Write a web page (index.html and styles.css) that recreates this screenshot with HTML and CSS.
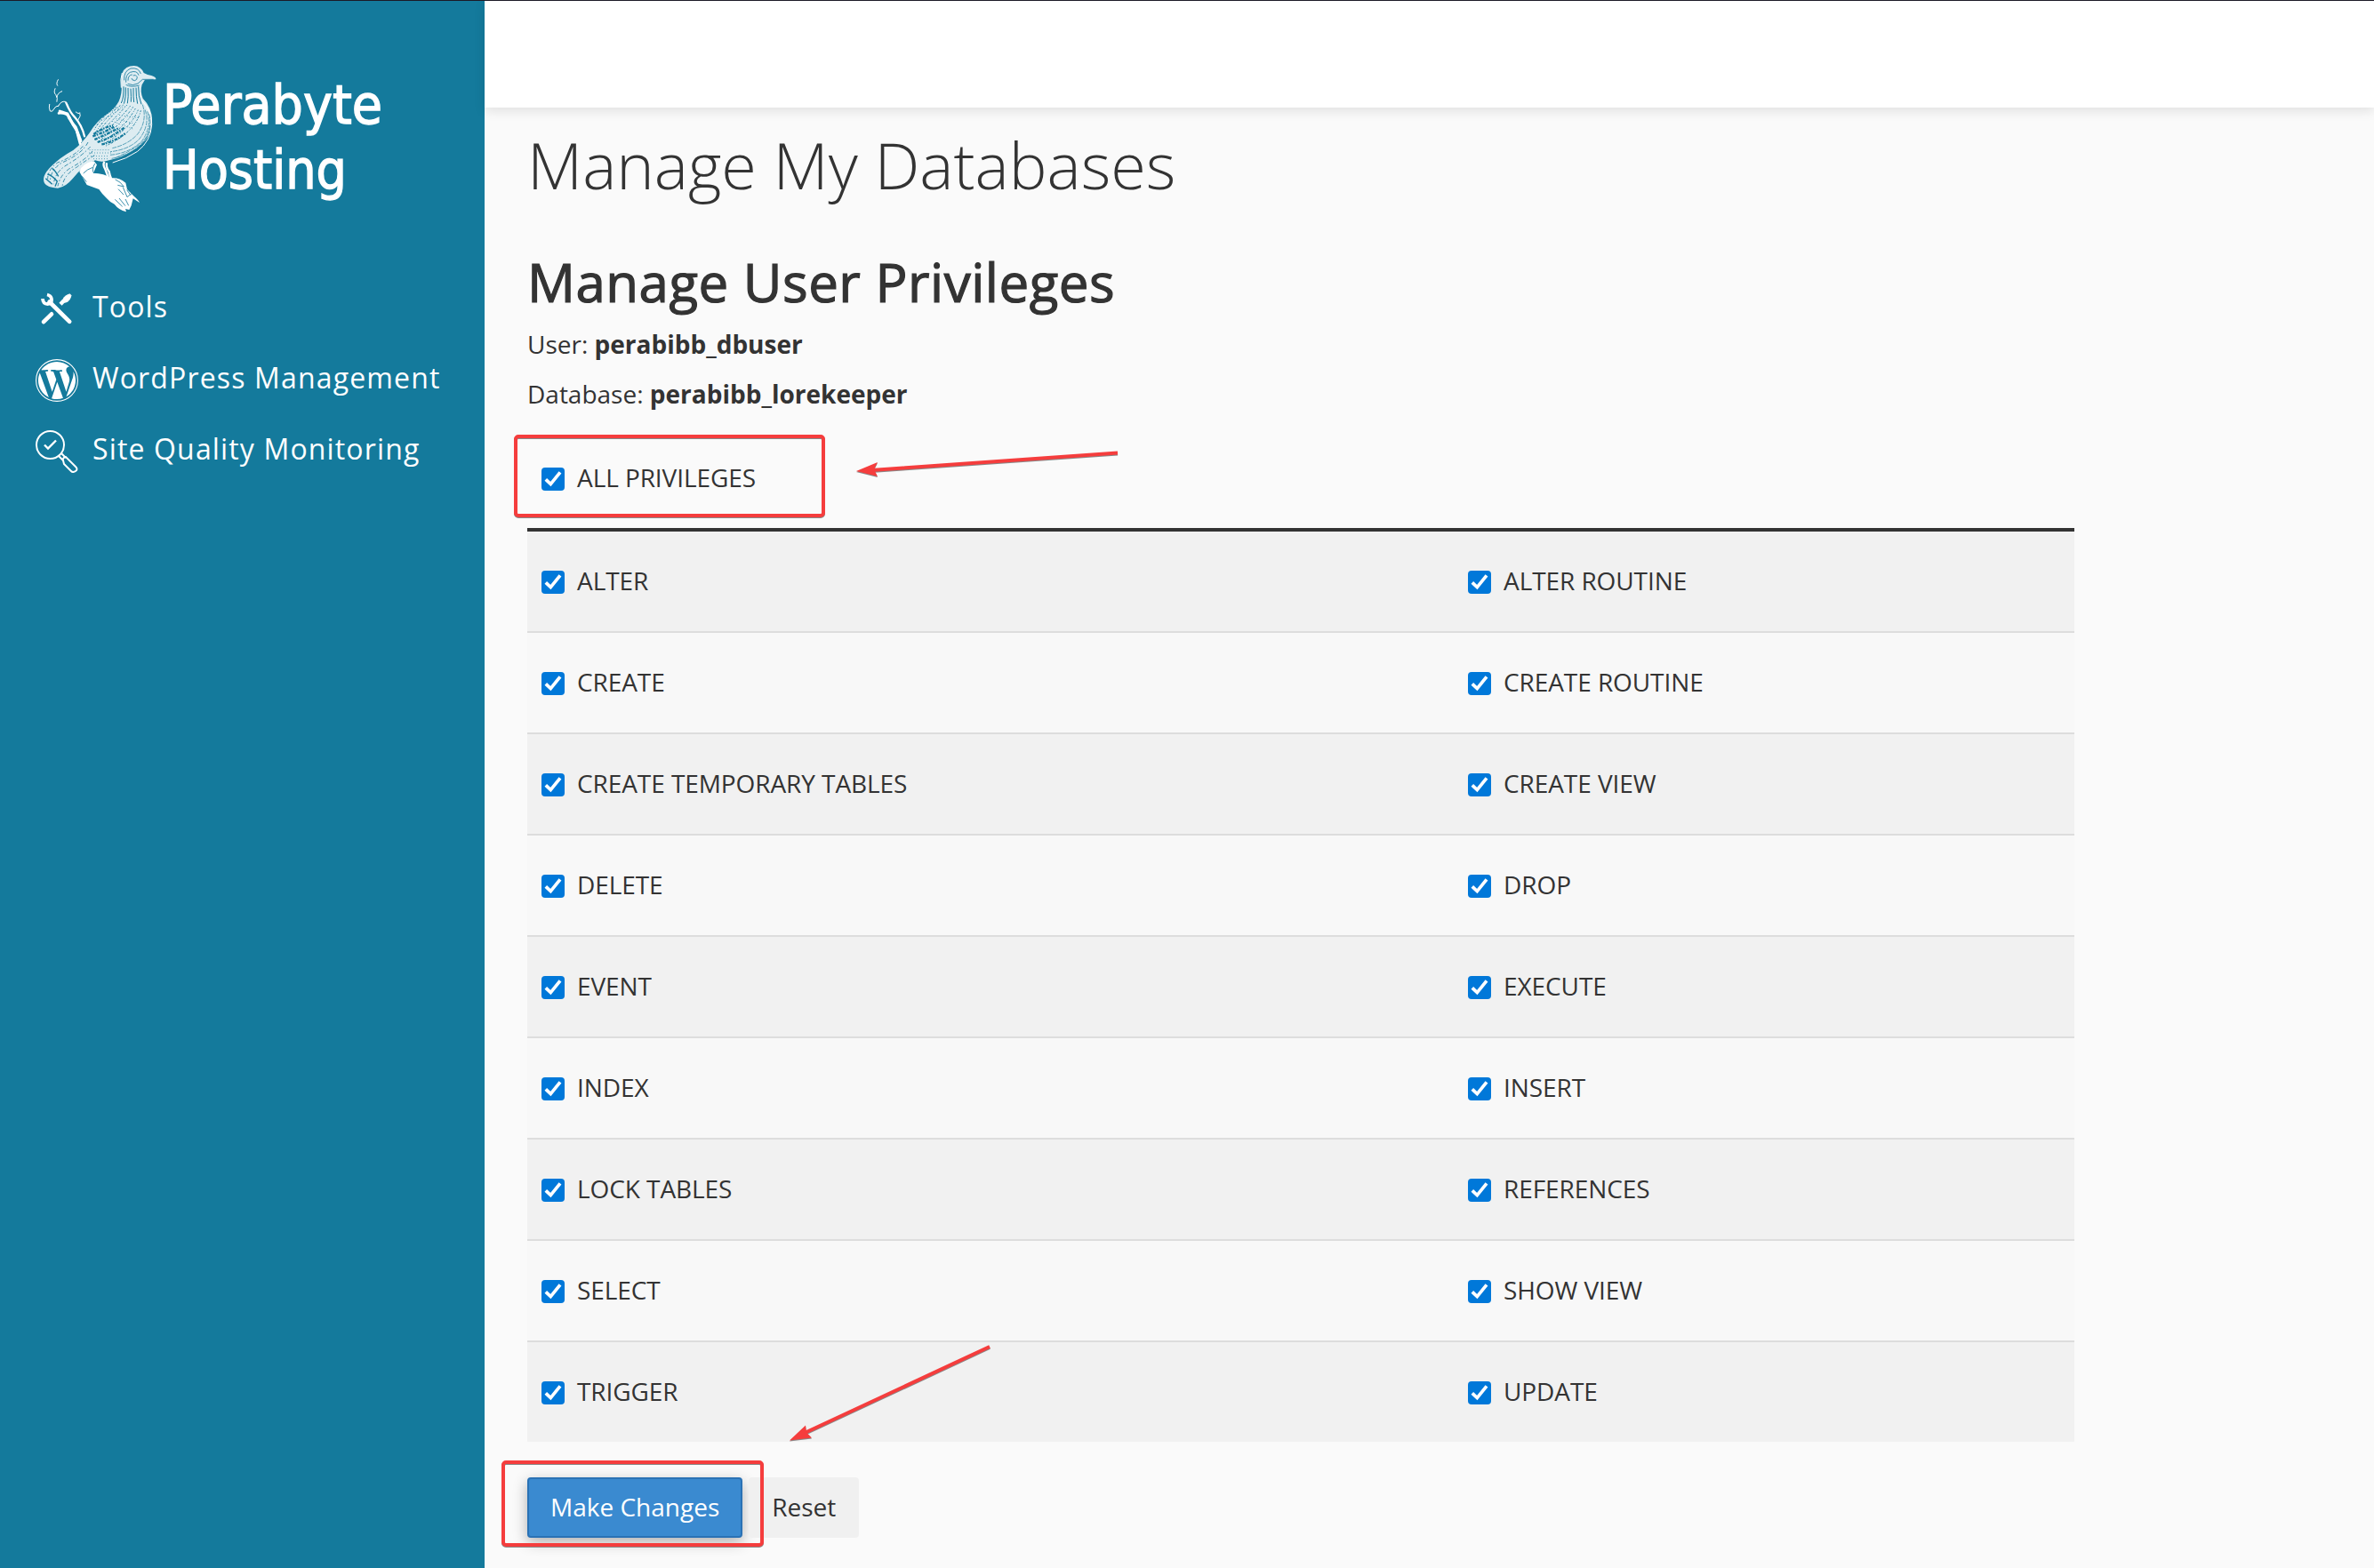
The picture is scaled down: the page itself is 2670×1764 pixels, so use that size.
FILE: index.html
```html
<!DOCTYPE html>
<html lang="en">
<head>
<meta charset="utf-8">
<title>Manage My Databases</title>
<link rel="stylesheet" href="styles.css">
</head>
<body>
<svg class="defs" width="0" height="0">
  <symbol id="check" viewBox="0 0 26 26">
    <rect width="26" height="26" rx="4" fill="#0078d9"/>
    <path d="M4.800 13.300l5.500 5.300L21 5.300" fill="none" stroke="#fff" stroke-width="3.700"/>
  </symbol>
</svg>
<div class="app">
  <aside class="sidebar">
    <div class="brand">
      <svg class="bird" viewBox="0 0 480 570">
        <g fill="none" stroke="#fff" stroke-linecap="round">
          <path stroke-width="3" d="M106 89q-8 13-2 20m-8 10q-6 14 2 20q8 12 4 24m17-35q-16 6-17 20M77 172q-3 12 2 23q8 4 12-6q6-12 16-12M107 178q8-18 24-15l9 14M166 198q10 8 13 2q6 10-5 24"/>
          <path stroke-width="7" d="M133 167q14 34 28 47q25 28 34 66"/>
          <path stroke-width="10" stroke-dasharray="9 3" d="M112 196l25 8q10 24 28 45l18 48"/>
          <path stroke-width="8" d="M108 202q30-2 38 17q9 24 22 41l12 45"/>
        </g>
        <path fill="#fff" d="M178 400q8-29 49-36l10 12-12 28q36 1 61 17q25-3 48 16l5 22 23 23q17 15 19 22l-22-14-6 24-7 14-13-3 3 10q-26-7-40-26q-14-6-24-18q-18-16-28-32l-41-15z"/>
        <path fill="#fff" fill-opacity=".86" d="M362 42q-30 0-39 24q-7 20-3 46q2 24-9 50q-12 23-40 43q-35 24-58 62q-27 38-56 60q-44 24-76 56q-32 32-21 55q9 15 45 17q27-4 50-32q34-43 76-62q22 8 41 1l36-9q46-17 81-48q32-27 34-78q1-43-31-75q-10-23-3-46l10-17 37-1q2-7-15-13q-13-2-26-9q-10-23-33-24z"/>
        <path fill="none" stroke="#fff" stroke-width="7" d="M262 365q-6 12 3 26q8 28 26 57M270 370q-3 15 8 29q4 24 22 50"/>
        <g fill="none" stroke="#147a9c">
          <path stroke-width="3" d="M327 112q2 36-8 56M334 115q1 36-6 55M342 117q2 32-2 52M351 119q2 31 1 45M360 117q-1 31 2 48M369 116q0 31 5 54M377 112q-1 33 10 60"/>
          <path stroke-width="2.500" d="M329 91q-2-31 22-40q27-4 34 18M335 98q-2-26 14-34q24-8 29 10M342 92q0-19 14-20M359 75q9-5 14 5q0 10-8 12q-11-1-11-8M341 103q17 8 34-1l16-14h37M335 106q16 10 45 2"/>
          <path stroke-width="3" stroke-dasharray="5 5 3 6 8 5" d="M302 181q-51 34-74 77M316 176q-53 41-85 94M326 174q-46 43-83 89M339 174q-48 52-96 97M350 177q-40 51-105 105M359 181q-31 48-110 112M367 186q-34 63-112 113M376 191q-27 66-116 114M385 193q-18 73-119 120"/>
          <path stroke-width="2" stroke-dasharray="16 3" d="M391 173q17 55-17 100q-32 35-85 47M399 190q19 49-18 98q-34 37-99 44M407 196q17 49-18 100q-42 41-107 47M414 204q10 46-16 91q-42 48-111 60M417 245q-6 46-51 73q-32 20-69 36"/>
          <path stroke-width="7" stroke-dasharray="11 3 5 4" d="M223 280q36-12 72-32M229 291q42-18 84-40M239 300q45-13 91-50M253 307q40-7 82-38M226 273q28-20 65-30"/>
          <path stroke-width="2.500" stroke-dasharray="14 7 5 6" d="M207 300q-20 40-90 70q-38 25-38 65M215 315q-27 30-77 60q-43 25-47 67M222 330q-24 30-79 60q-30 21-38 58M229 344q-27 16-60 40q-44 27-49 65M190 313q-29 35-86 56q-33 23-33 55"/>
          <path stroke-width="3" stroke-dasharray="2 7" d="M212 326h72M210 336h74M216 347h60M225 356h50M250 218l65-40M245 232l89-55M312 208l64 10M302 221l68 18M288 229l70 26"/>
          <path stroke-width="4" d="M70 408q14 2 33 24l-7 17M86 388q10 7 21 27M64 422l22 20"/>
          <path stroke-width="2.500" d="M191 405q13-14 32-20M187 415l15 19M230 372q-12 21-3 33M299 426q18 7 29 24l-21-5M309 458l18 19M325 452l14 33 15-12M312 489l21 26M333 492l11 22M298 493l25 24M338 461l13 18"/>
        </g>
        <path fill="none" stroke="#fff" stroke-width="3" d="M388 158q37 41 34 83q-3 55-48 90q-36 25-84 38M322 66q-7 20-3 50"/>
      </svg>
      <svg class="wordmark" viewBox="0 0 256 170">
        <text x="-1" y="75" textLength="247" lengthAdjust="spacingAndGlyphs">Perabyte</text>
        <text x="-1" y="148" textLength="207" lengthAdjust="spacingAndGlyphs">Hosting</text>
      </svg>
    </div>
    <nav class="nav">
      <a class="nav-item"><svg class="nav-icon" viewBox="0 0 48 48" fill="none" stroke="#fff" stroke-linecap="round">
        <path d="M15.500 15.500L38.200 37.800" stroke-width="4.600"/>
        <path d="M18 29.300L9 38.200" stroke-width="4.600"/>
        <path d="M8 12q.3 6 5.500 6t4.500-5.500q-.5-4-5-5" stroke-width="3.800" stroke-linecap="butt"/>
        <path d="M28 18.200L32 14" stroke-width="4.400" stroke-linecap="butt"/>
        <path d="M31 16q-1-5 3.500-7.500l4-1.700 1.500 1.700-1.500 4q-2.500 4.500-7.500 3.500z" fill="#fff"/>
      </svg><span>Tools</span></a>
      <a class="nav-item"><svg class="nav-icon" viewBox="0 0 24 24">
        <circle cx="12" cy="12" r="11.700" fill="none" stroke="#fff" stroke-width=".55"/>
        <path fill="#fff" transform="translate(.3 .3) scale(.975)" d="M21.469 6.825c.84 1.537 1.318 3.300 1.318 5.175 0 3.979-2.156 7.456-5.363 9.325l3.295-9.527c.615-1.540.82-2.771.82-3.864 0-.405-.026-.78-.07-1.110m-7.981.105c.647-.03 1.232-.105 1.232-.105.582-.075.514-.93-.067-.899 0 0-1.755.135-2.880.135-1.064 0-2.850-.15-2.850-.15-.585-.03-.661.855-.075.885 0 0 .54.061 1.125.09l1.680 4.605-2.370 7.080L5.354 6.900c.649-.03 1.234-.1 1.234-.1.585-.075.516-.93-.065-.896 0 0-1.746.138-2.874.138-.2 0-.438-.008-.69-.015C4.911 3.150 8.235 1.215 12 1.215c2.809 0 5.365 1.072 7.286 2.833-.046-.003-.091-.009-.141-.009-1.060 0-1.812.923-1.812 1.914 0 .89.513 1.643 1.060 2.531.411.72.89 1.643.89 2.977 0 .915-.354 1.994-.821 3.479l-1.075 3.585-3.900-11.610zM12 22.784c-1.059 0-2.081-.153-3.048-.437l3.237-9.406 3.315 9.087c.024.053.05.101.078.149-1.120.393-2.325.609-3.582.609M1.211 12c0-1.564.336-3.050.935-4.390L7.290 21.709C3.694 19.960 1.212 16.271 1.211 12"/>
      </svg><span>WordPress Management</span></a>
      <a class="nav-item"><svg class="nav-icon" viewBox="0 0 48 48" fill="none" stroke="#fff" stroke-width="2">
        <circle cx="16.500" cy="16.500" r="15.500"/>
        <path d="M10 16.500l4 4 9-9" stroke-width="2.400"/>
        <path d="M26 29l5 5M29 26l5 5"/>
        <path d="M31 34q-1-3 3-4l11 11q3 3 0 5t-5 0l-8-8z"/>
      </svg><span>Site Quality Monitoring</span></a>
    </nav>
  </aside>
  <div class="page">
    <header class="topbar"></header>
    <main class="content">
      <h1 class="title">Manage My Databases</h1>
      <h2 class="subtitle">Manage User Privileges</h2>
      <p class="meta">User: <b>perabibb_dbuser</b></p>
      <p class="meta">Database: <b>perabibb_lorekeeper</b></p>
      <div class="all"><label class="privilege"><svg class="box"><use href="#check"/></svg>ALL PRIVILEGES</label></div>
      <div class="table">
        <div class="row"><label class="privilege"><svg class="box"><use href="#check"/></svg>ALTER</label><label class="privilege"><svg class="box"><use href="#check"/></svg>ALTER ROUTINE</label></div>
        <div class="row"><label class="privilege"><svg class="box"><use href="#check"/></svg>CREATE</label><label class="privilege"><svg class="box"><use href="#check"/></svg>CREATE ROUTINE</label></div>
        <div class="row"><label class="privilege"><svg class="box"><use href="#check"/></svg>CREATE TEMPORARY TABLES</label><label class="privilege"><svg class="box"><use href="#check"/></svg>CREATE VIEW</label></div>
        <div class="row"><label class="privilege"><svg class="box"><use href="#check"/></svg>DELETE</label><label class="privilege"><svg class="box"><use href="#check"/></svg>DROP</label></div>
        <div class="row"><label class="privilege"><svg class="box"><use href="#check"/></svg>EVENT</label><label class="privilege"><svg class="box"><use href="#check"/></svg>EXECUTE</label></div>
        <div class="row"><label class="privilege"><svg class="box"><use href="#check"/></svg>INDEX</label><label class="privilege"><svg class="box"><use href="#check"/></svg>INSERT</label></div>
        <div class="row"><label class="privilege"><svg class="box"><use href="#check"/></svg>LOCK TABLES</label><label class="privilege"><svg class="box"><use href="#check"/></svg>REFERENCES</label></div>
        <div class="row"><label class="privilege"><svg class="box"><use href="#check"/></svg>SELECT</label><label class="privilege"><svg class="box"><use href="#check"/></svg>SHOW VIEW</label></div>
        <div class="row"><label class="privilege"><svg class="box"><use href="#check"/></svg>TRIGGER</label><label class="privilege"><svg class="box"><use href="#check"/></svg>UPDATE</label></div>
      </div>
      <div class="actions">
        <button class="button primary">Make Changes</button>
        <button class="button">Reset</button>
      </div>
    </main>
  </div>
</div>
<svg class="annotations" viewBox="0 0 2670 1764">
  <g fill="none" stroke="#f53d3d" stroke-width="4">
    <rect x="580" y="491" width="346" height="89" rx="3"/>
    <rect x="566" y="1645" width="291" height="93" rx="3"/>
    <path d="M980 529L1257 509.500M905 1612L1113 1515"/>
  </g>
  <path fill="#f53d3d" d="M963 530l24-10-4 8 4 8zM888 1620.500l18-17 1 8 6 6z"/>
</svg>
</body>
</html>
```
FILE: styles.css
```css
* { box-sizing: border-box; }
body {
  margin: 0;
  background: #fafafa;
  color: #333;
  font: 28px/56px "Open Sans", sans-serif;
}
.defs { position: absolute; }
.app {
  display: flex;
  height: 1764px;
  overflow: hidden;
  border-top: 1px solid #1c1a26;
}
.sidebar {
  width: 545px;
  flex: none;
  background: #147a9c;
  color: #fff;
}
.brand {
  display: flex;
  height: 249px;
  padding: 59px 0 0 30px;
}
.bird { width: 160px; height: 190px; flex: none; }
.wordmark {
  width: 256px;
  height: 170px;
  margin-left: -6px;
  margin-top: 4px;
  overflow: visible;
  font: 60px "DejaVu Sans Condensed", "DejaVu Sans", sans-serif;
  fill: #fff;
  stroke: #fff;
  stroke-width: 1.3px;
}
.nav { padding: 55px 0 0 40px; }
.nav-item {
  display: flex;
  height: 80px;
  gap: 16px;
  font-size: 32px;
  line-height: 80px;
  letter-spacing: 1.15px;
  white-space: nowrap;
}
.nav-icon { width: 48px; height: 48px; margin-top: 19px; flex: none; }
.page { flex: 1; }
.topbar {
  height: 120px;
  background: #fff;
  box-shadow: 0 4px 12px rgba(0, 0, 0, .1);
}
.content { width: 1788px; padding: 24px 0 0 48px; }
.title {
  margin: 0;
  font-size: 72px;
  font-weight: 300;
  line-height: 80px;
}
.subtitle {
  margin: 50px 0 0;
  font-size: 60px;
  font-weight: 400;
  line-height: 84px;
  letter-spacing: .5px;
  -webkit-text-stroke: 1.2px #333;
}
.meta { margin: 0; }
.all { height: 123px; padding-top: 55px; }
.privilege {
  display: flex;
  align-items: flex-start;
  height: 26px;
  padding-left: 16px;
  gap: 14px;
  line-height: 23px;
  letter-spacing: -.08px;
}
.box { width: 26px; height: 26px; flex: none; }
.table { border-top: 4px solid #333; }
.row {
  display: grid;
  grid-template-columns: 1042px 1fr;
  height: 114px;
  padding-top: 44px;
  border-bottom: 2px solid #ddd;
  background: #f8f8f8;
}
.row:nth-child(odd) { background: #f1f1f1; }
.row:last-child { height: 112px; border-bottom: 0; }
.actions { display: flex; gap: 7px; padding-top: 40px; }
.button {
  height: 68px;
  padding: 0 24px 2px;
  border: 2px solid #f0f0f0;
  border-radius: 4px;
  background: #f0f0f0;
  color: #333;
  font: inherit;
  line-height: 60px;
}
.primary {
  border-color: #2a72b5;
  background: #3a8ad0;
  color: #fff;
  box-shadow: 0 5px 16px rgba(0, 0, 0, .3);
}
.annotations {
  position: absolute;
  left: 0;
  top: 0;
  width: 2670px;
  height: 1764px;
  filter: drop-shadow(0 1px 0 #888);
}
```
